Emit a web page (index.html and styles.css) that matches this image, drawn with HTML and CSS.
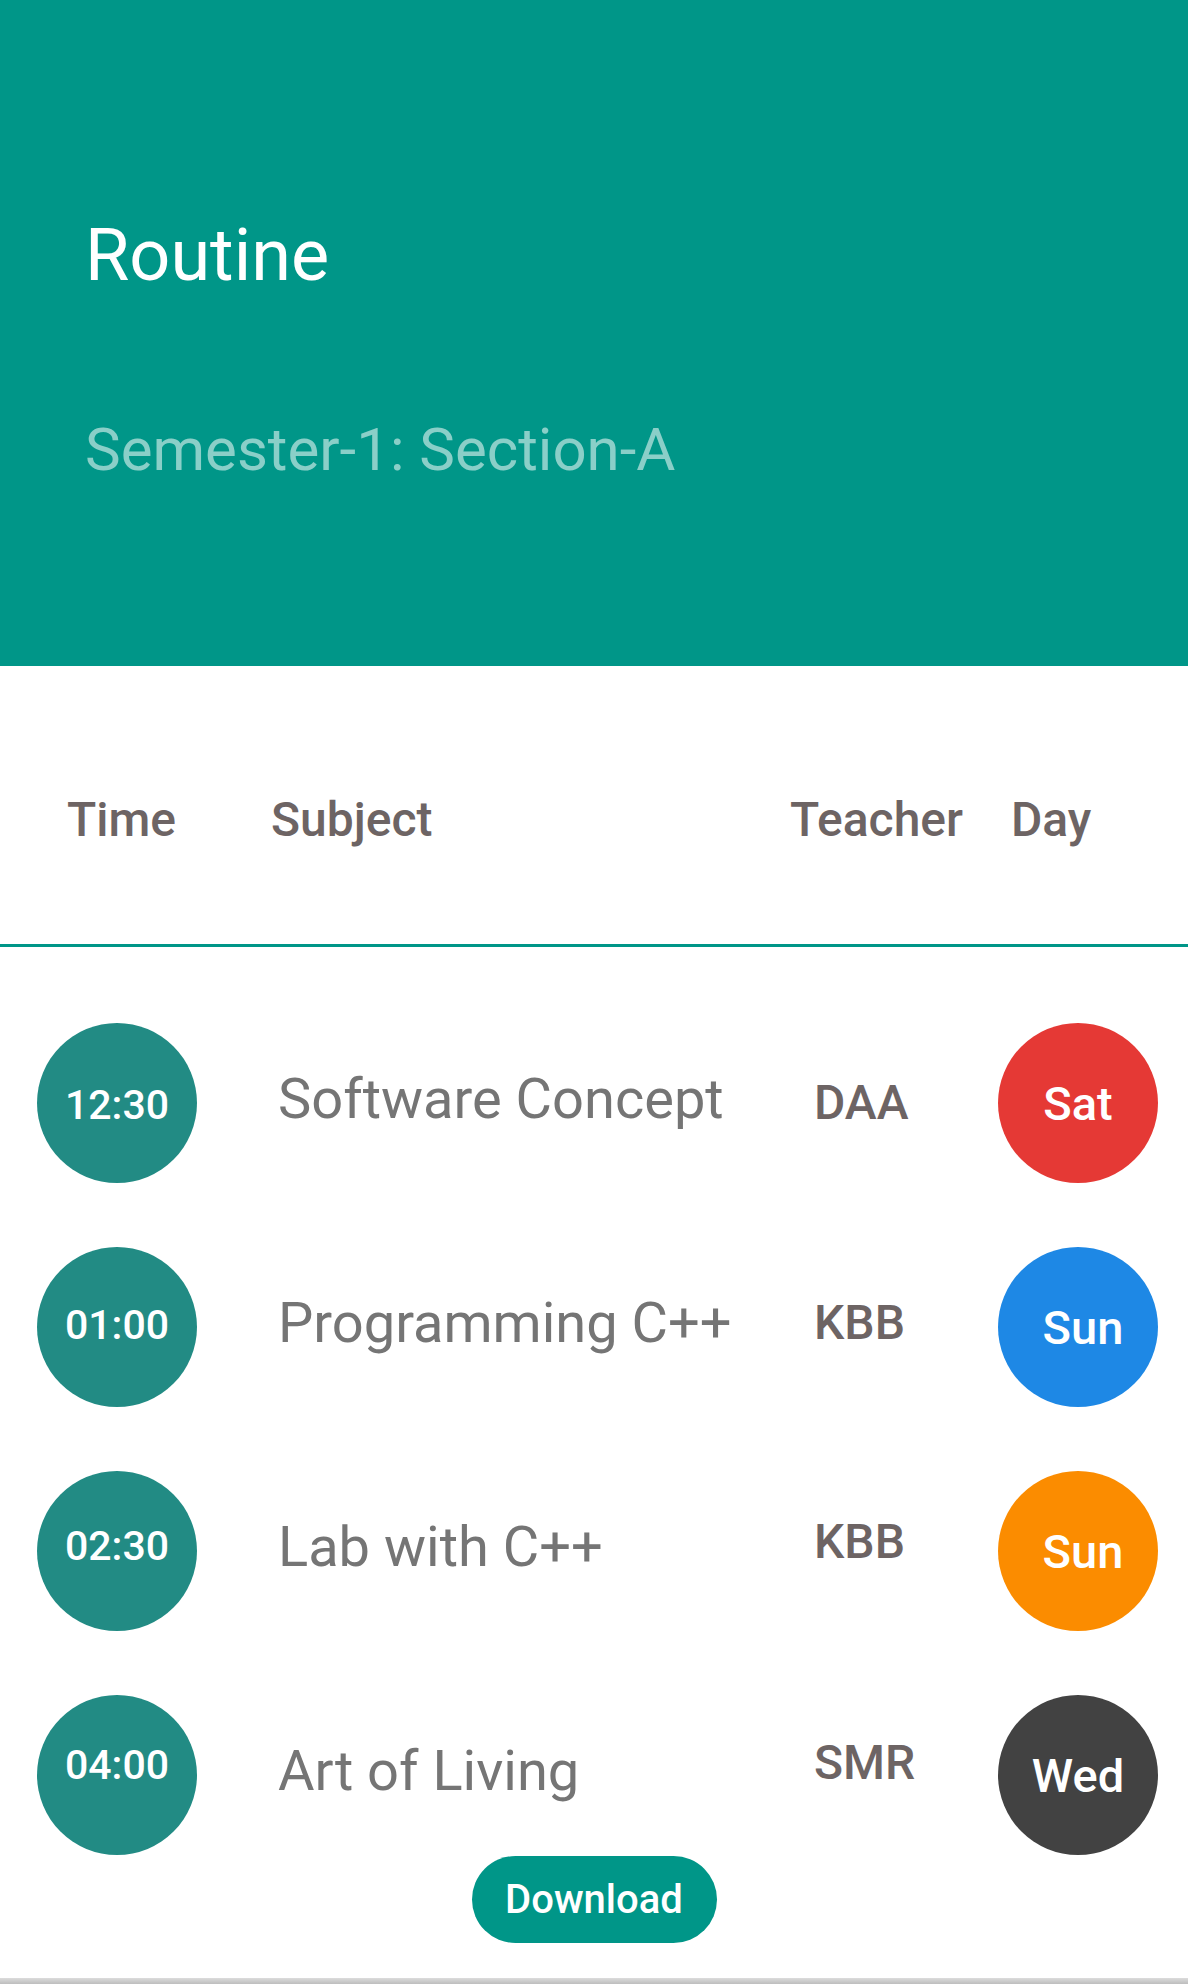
FILE: index.html
```html
<!DOCTYPE html>
<html lang="en">
<head>
<meta charset="utf-8">
<title>Routine</title>
<link rel="stylesheet" href="styles.css">
</head>
<body>
<div class="page">
  <header class="appbar">
    <h1 class="appbar-title">Routine</h1>
    <p class="appbar-sub">Semester-1: Section-A</p>
  </header>

  <div class="colhead">
    <span class="ch ch-time">Time</span>
    <span class="ch ch-subject">Subject</span>
    <span class="ch ch-teacher">Teacher</span>
    <span class="ch ch-day">Day</span>
  </div>

  <ul class="list">
    <li class="row row-1">
      <div class="time"><span class="time-label">12:30</span></div>
      <div class="subject"><span class="subject-label">Software Concept</span></div>
      <div class="teacher"><span class="teacher-label">DAA</span></div>
      <div class="day day-red"><span class="day-label">Sat</span></div>
    </li>
    <li class="row row-2">
      <div class="time"><span class="time-label">01:00</span></div>
      <div class="subject"><span class="subject-label">Programming C++</span></div>
      <div class="teacher"><span class="teacher-label">KBB</span></div>
      <div class="day day-blue"><span class="day-label">Sun</span></div>
    </li>
    <li class="row row-3">
      <div class="time"><span class="time-label">02:30</span></div>
      <div class="subject"><span class="subject-label">Lab with C++</span></div>
      <div class="teacher"><span class="teacher-label">KBB</span></div>
      <div class="day day-orange"><span class="day-label">Sun</span></div>
    </li>
    <li class="row row-4">
      <div class="time"><span class="time-label">04:00</span></div>
      <div class="subject"><span class="subject-label">Art of Living</span></div>
      <div class="teacher"><span class="teacher-label">SMR</span></div>
      <div class="day day-dark"><span class="day-label">Wed</span></div>
    </li>
  </ul>

  <div class="actions">
    <button class="btn-download" type="button">Download</button>
  </div>
  <div class="shade"></div>
</div>
</body>
</html>
```

FILE: styles.css
```css
* { box-sizing: border-box; }

html, body {
  margin: 0;
  padding: 0;
  background: #ffffff;
}

body {
  font-family: Roboto, "Noto Sans", "Liberation Sans", sans-serif;
  width: 1188px;
  height: 1984px;
  overflow: hidden;
}

.page {
  display: flex;
  flex-direction: column;
  width: 1188px;
}

/* ---------- App bar ---------- */
.appbar {
  height: 666px;
  background: #009688;
  padding: 220px 0 0 85px;
  display: flex;
  flex-direction: column;
}

.appbar-title {
  margin: 0;
  font-size: 72px;
  line-height: 72px;
  font-weight: 400;
  color: #ffffff;
}

.appbar-sub {
  margin: 128px 0 0;
  font-size: 60px;
  line-height: 60px;
  font-weight: 400;
  color: #8acfc8;
}

/* ---------- Column headers ---------- */
.colhead {
  display: flex;
  align-items: flex-start;
  padding: 130px 0 100px 67px;
  border-bottom: 3px solid #009688;
}

.ch {
  font-size: 48px;
  line-height: 48px;
  font-weight: 500;
  color: #6d6464;
}

.ch-time { width: 204px; }
.ch-subject { width: 519px; }
.ch-teacher { width: 221px; }

/* ---------- List ---------- */
.list {
  list-style: none;
  margin: 0;
  padding: 76px 0 0 37px;
  display: flex;
  flex-direction: column;
  gap: 64px;
}

.row {
  display: flex;
  align-items: center;
  height: 160px;
}

.time {
  width: 160px;
  height: 160px;
  border-radius: 50%;
  background: #228b84;
  display: flex;
  align-items: center;
  justify-content: center;
  flex: none;
}

.time-label {
  font-size: 41px;
  line-height: 41px;
  font-weight: 500;
  color: #ffffff;
}

.subject {
  width: 536px;
  margin-left: 81px;
  display: flex;
  align-items: center;
  flex: none;
}

.subject-label {
  font-size: 56px;
  line-height: 56px;
  font-weight: 400;
  color: #757575;
  white-space: nowrap;
  margin-bottom: 8px;
}

.teacher {
  width: 184px;
  display: flex;
  align-items: center;
  flex: none;
}

.teacher-label {
  font-size: 48px;
  line-height: 48px;
  font-weight: 500;
  color: #6d6464;
}

.day {
  width: 160px;
  height: 160px;
  border-radius: 50%;
  display: flex;
  align-items: center;
  justify-content: center;
  flex: none;
}

.day-label {
  font-size: 47px;
  line-height: 47px;
  font-weight: 500;
  color: #ffffff;
}

.day-red { background: #e53935; }
.day-blue { background: #1e88e5; }
.day-orange { background: #fb8c00; }
.day-dark { background: #424242; }

/* per-row drift seen in the reference */
.row-1 .time-label { margin-top: 4px; }
.row-2 .time-label { margin-bottom: 4px; }
.row-3 .time-label { margin-bottom: 10px; }
.row-4 .time-label { margin-bottom: 20px; }

.row-2 .teacher-label { margin-bottom: 8px; }
.row-3 .teacher-label { margin-bottom: 18px; }
.row-4 .teacher-label { margin-bottom: 25px; }

.day-blue .day-label,
.day-orange .day-label { margin-left: 10px; }

/* ---------- Actions ---------- */
.actions {
  display: flex;
  justify-content: center;
  padding: 1px 0 35px;
}

.btn-download {
  width: 245px;
  height: 87px;
  border: none;
  border-radius: 44px;
  background: #009688;
  color: #ffffff;
  font-family: Roboto, "Noto Sans", "Liberation Sans", sans-serif;
  font-size: 40px;
  font-weight: 500;
  padding: 0;
  display: flex;
  align-items: center;
  justify-content: center;
}

.shade {
  height: 6px;
  background: linear-gradient(#dcdcdc, #bdbdbd);
}
```
